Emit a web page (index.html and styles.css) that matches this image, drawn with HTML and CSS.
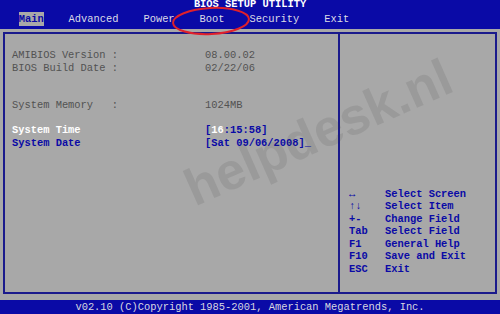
FILE: index.html
```html
<!DOCTYPE html>
<html lang="en">
<head>
<meta charset="UTF-8" />
<meta name="viewport" content="width=device-width, initial-scale=1" />
<title>BIOS Setup Utility</title>
<link rel="stylesheet" href="styles.css">
</head>
<body>
<div class="screen">
  <header class="topbar">
    <div class="title">BIOS SETUP UTILITY</div>
    <nav class="menu">
      <span class="menu-item active">Main</span>
      <span class="menu-item">Advanced</span>
      <span class="menu-item">Power</span>
      <span class="menu-item">Boot</span>
      <span class="menu-item">Security</span>
      <span class="menu-item">Exit</span>
    </nav>
  </header>

  <main class="workspace">
    <div class="frame">
      <section class="info">
        <div class="row"><span class="label">AMIBIOS Version :</span><span class="value">08.00.02</span></div>
        <div class="row"><span class="label">BIOS Build Date :</span><span class="value">02/22/06</span></div>
        <div class="row spacer"></div>
        <div class="row spacer"></div>
        <div class="row"><span class="label">System Memory   :</span><span class="value">1024MB</span></div>
        <div class="row spacer"></div>
        <div class="row selected"><span class="label">System Time</span><span class="value">[<span class="hl">16</span>:15:58]</span></div>
        <div class="row editable"><span class="label">System Date</span><span class="value">[Sat 09/06/2008]_</span></div>
      </section>

      <aside class="help">
        <div class="keys">
          <span class="key">&harr;</span><span>Select Screen</span>
          <span class="key">&uarr;&darr;</span><span>Select Item</span>
          <span class="key">+-</span><span>Change Field</span>
          <span class="key">Tab</span><span>Select Field</span>
          <span class="key">F1</span><span>General Help</span>
          <span class="key">F10</span><span>Save and Exit</span>
          <span class="key">ESC</span><span>Exit</span>
        </div>
      </aside>
    </div>
  </main>

  <footer class="footer">v02.10 (C)Copyright 1985-2001, American Megatrends, Inc.</footer>

  <!-- overlays from the photo: watermark and the red marker ring -->
  <div class="watermark">helpdesk.nl</div>
  <svg class="ring" width="84" height="32" viewBox="0 0 84 32">
    <ellipse cx="42" cy="16" rx="38" ry="13" fill="none" stroke="#e0202a" stroke-width="2" transform="rotate(-3 42 16)" />
  </svg>
</div>
</body>
</html>
```

FILE: styles.css
```css
/* --- RESET & BASE --- */
*, *::before, *::after {
  box-sizing: border-box;
}
body {
  margin: 0;
  background: #a8a8a8;
  font-family: "Liberation Mono", "DejaVu Sans Mono", monospace;
  font-size: 10.4px;
  font-weight: 700;
  overflow: hidden;
}
/* --- SCREEN --- */
.screen {
  position: relative;
  width: 500px;
  height: 314px;
  display: flex;
  flex-direction: column;
  overflow: hidden;
}
/* --- TOP BAR --- */
.topbar {
  background: #0a0aa6;
  height: 29px;
  overflow: hidden;
}
.title {
  color: #fff;
  text-align: center;
  line-height: 12px;
  margin-top: -2px;
}
.menu {
  display: flex;
  gap: 4ch;
  padding-left: 3ch;
  margin-top: 2px;
  color: #dcdce6;
  line-height: 14px;
  font-weight: 400;
}
.menu-item.active {
  background: #a8a8a8;
  color: #0a0aa6;
  font-weight: 700;
}
/* --- MAIN AREA --- */
.workspace {
  flex: 1;
  padding: 3px 3px 6px 3px;
}
.frame {
  height: 100%;
  border: 2px solid #1a1a8c;
  display: flex;
}
.info {
  width: 335px;
  border-right: 2px solid #1a1a8c;
  padding: 15px 0 0 7px;
}
.row {
  display: flex;
  height: 12.5px;
  line-height: 12.5px;
  color: #525252;
  font-weight: 400;
}
.label {
  width: 193px;
  white-space: pre;
}
.value {
  white-space: pre;
}
.row.selected .label {
  color: #fff;
  font-weight: 700;
}
.row.selected .value,
.row.editable {
  color: #0a0aa6;
  font-weight: 700;
}
.hl {
  color: #fff;
}
/* --- HELP PANEL --- */
.help {
  flex: 1;
  display: flex;
  align-items: flex-end;
  padding: 0 0 17px 9px;
}
.keys {
  display: grid;
  grid-template-columns: 36px auto;
  line-height: 12.5px;
  color: #0a0aa6;
}
/* --- FOOTER --- */
.footer {
  background: #0a0aa6;
  color: #d8d8e0;
  height: 14px;
  line-height: 14px;
  text-align: center;
  font-weight: 400;
}
/* --- OVERLAYS --- */
.watermark {
  position: absolute;
  left: 198px;
  top: 162px;
  font-family: "Liberation Sans", Arial, sans-serif;
  font-size: 52px;
  font-weight: 700;
  color: rgba(60, 60, 60, 0.12);
  transform: rotate(-24deg);
  transform-origin: 0 100%;
  line-height: 1;
  pointer-events: none;
}
.ring {
  position: absolute;
  left: 169px;
  top: 5px;
}
```
